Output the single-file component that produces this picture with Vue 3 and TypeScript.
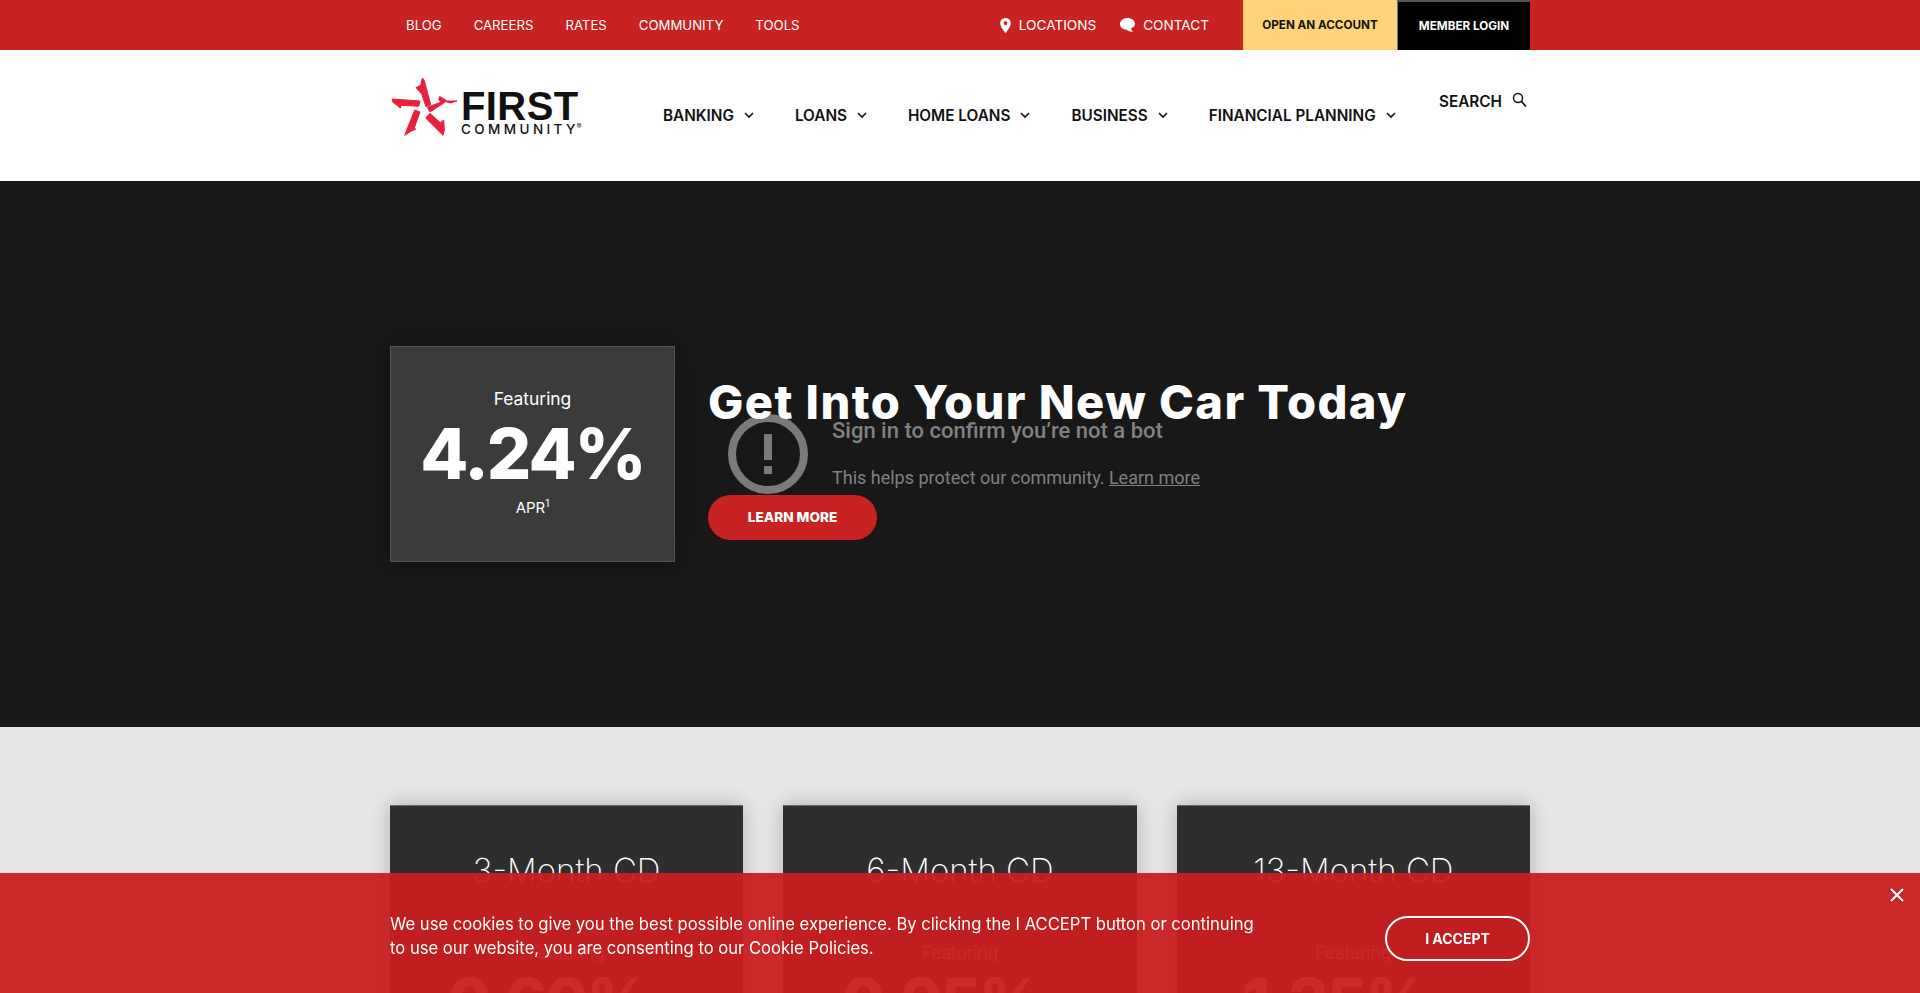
<script setup lang="ts">
const topLinks = ['Blog', 'Careers', 'Rates', 'Community', 'Tools']
const mainLinks = ['Banking', 'Loans', 'Home Loans', 'Business', 'Financial Planning']
const cds = [
  { name: '3-Month CD', rate: '0.60%' },
  { name: '6-Month CD', rate: '0.95%' },
  { name: '13-Month CD', rate: '1.25%' },
]
</script>

<template>
  <div class="page">
    <div class="topbar">
      <div class="wrap topbar__inner">
        <a v-for="link in topLinks" :key="link" class="topbar__link">{{ link }}</a>
        <a class="topbar__link topbar__link--icon topbar__locations">
          <svg width="11" height="15" viewBox="0 0 11 15"><path fill="#fff" fill-rule="evenodd" d="M5.500 0C2.500 0 .2 2.300.2 5.200c0 3.500 4.200 8.500 5.300 9.800 1.100-1.300 5.300-6.300 5.300-9.800C10.800 2.300 8.500 0 5.500 0zm0 7a1.900 1.900 0 1 1 0-3.800 1.900 1.900 0 0 1 0 3.800z" /></svg>
          Locations
        </a>
        <a class="topbar__link topbar__link--icon topbar__contact">
          <svg width="15" height="14" viewBox="0 0 15 14"><path fill="#fff" d="M7.500 0C3.400 0 0 2.500 0 6c0 3.200 2.800 5.600 6.500 5.800 1.500 1.300 3.800 2 6.500 2.200-1-.9-1.700-2.200-1.900-3.500C13.500 9.300 15 7.800 15 6 15 2.500 11.600 0 7.500 0z" /></svg>
          Contact
        </a>
        <a class="cta cta--open">Open an Account</a>
        <a class="cta cta--login">Member Login</a>
      </div>
    </div>

    <header class="header">
      <div class="wrap header__inner">
        <a class="logo">
          <svg class="logo__star" width="72" height="68" viewBox="0 0 216 204">
            <g fill="#e6203f" stroke="#e6203f" stroke-width="3" stroke-linejoin="round">
              <path d="M103 15l6 8 19 72-14 6-13-38-17-19 14-7z" />
              <path d="M207 84l-30 0-22-14-3 10 8 7-42 16 8 14 47-31 14 4z" />
              <path d="M13 78l83 6-4 16-52-3-3 8-24-19z" />
              <path d="M50 187l30-76 16 6-17 47 4 5-13 5z" />
              <path d="M165 187l-52-52 13-14 31 28 10-8 2 30z" />
            </g>
          </svg>
          <span class="logo__text">
            <span class="logo__first">FIRST</span>
            <span class="logo__community">COMMUNITY<sup>®</sup></span>
          </span>
        </a>
        <nav class="mainnav">
          <a v-for="link in mainLinks" :key="link" class="mainnav__link">
            {{ link }}
            <svg width="10" height="7" viewBox="0 0 10 7"><path d="M1 1l4 4 4-4" fill="none" stroke="#111" stroke-width="1.600" /></svg>
          </a>
        </nav>
        <a class="search">
          Search
          <svg class="search__icon" width="15" height="16" viewBox="0 0 15 16"><circle cx="6" cy="6" r="4.500" fill="none" stroke="#111" stroke-width="1.500" /><path d="M9.500 9.500l4.500 5" stroke="#111" stroke-width="1.800" /></svg>
        </a>
      </div>
    </header>

    <section class="hero">
      <div class="wrap hero__inner">
        <div class="rate">
          <p class="rate__label">Featuring</p>
          <p class="rate__value">4.24%</p>
          <p class="rate__apr">APR<sup>1</sup></p>
        </div>
        <div class="hero__copy">
          <h1 class="hero__title">Get Into Your New Car Today</h1>
          <a class="hero__btn">Learn More</a>
        </div>
      </div>
      <div class="bot">
        <svg class="bot__icon" width="80" height="80" viewBox="0 0 80 80">
          <circle cx="40" cy="40" r="36" fill="none" stroke="#7a7a7a" stroke-width="8" />
          <rect x="36" y="20" width="8" height="26" fill="#7a7a7a" />
          <rect x="36" y="52" width="8" height="8" fill="#7a7a7a" />
        </svg>
        <div>
          <p class="bot__title">Sign in to confirm you’re not a bot</p>
          <p class="bot__text">This helps protect our community. <u>Learn more</u></p>
        </div>
      </div>
    </section>

    <section class="rates">
      <div class="wrap rates__grid">
        <div v-for="cd in cds" :key="cd.name" class="card">
          <h2 class="card__name">{{ cd.name }}</h2>
          <div class="card__rule"></div>
          <p class="card__label">Featuring</p>
          <p class="card__rate">{{ cd.rate }}</p>
        </div>
      </div>
    </section>

    <div class="cookie">
      <div class="wrap cookie__inner">
        <p class="cookie__text">We use cookies to give you the best possible online experience. By clicking the I ACCEPT button or continuing to use our website, you are consenting to our Cookie Policies.</p>
        <button class="cookie__btn">I Accept</button>
      </div>
      <svg class="cookie__close" width="14" height="14" viewBox="0 0 14 14"><path d="M1 1l12 12M13 1L1 13" stroke="#fff" stroke-width="2" /></svg>
    </div>
  </div>
</template>

<style>
html, body { margin: 0; overflow: hidden; }
</style>

<style scoped>
.page {
  height: 100vh;
  overflow: hidden;
  font-family: Inter, "Liberation Sans", sans-serif;
  background: #e6e7e8;
}
p, h1, h2 { margin: 0; }
.wrap { width: 1140px; margin: 0 auto; }

.topbar { height: 50px; background: #c82222; }
.topbar__inner { display: flex; align-items: center; height: 50px; padding-left: 16px; box-sizing: border-box; }
.topbar__link {
  color: #fff;
  font-size: 13.200px;
  text-transform: uppercase;
  margin-right: 32px;
}
.topbar__link--icon { display: flex; align-items: center; gap: 8px; font-size: 13.600px; }
.topbar__locations { margin-left: auto; margin-right: 24px; }
.topbar__contact { margin-right: 34px; }
.cta {
  height: 50px;
  display: flex;
  align-items: center;
  justify-content: center;
  box-sizing: border-box;
  font-size: 11.700px;
  font-weight: 700;
  text-transform: uppercase;
}
.cta--open { width: 154px; background: #ffd37a; color: #111; }
.cta--login { width: 133px; background: #000; color: #fff; border-top: 2px solid #555; border-left: 1px solid #777; }

.header { height: 131px; background: #fff; }
.header__inner { display: flex; align-items: center; height: 131px; position: relative; }
.logo { display: flex; align-items: center; margin-left: -2px; margin-bottom: 18px; }
.logo__star { flex: none; }
.logo__text { display: flex; flex-direction: column; margin-left: 1px; margin-top: 13px; width: 128px; }
.logo__first {
  font-family: "Liberation Sans", sans-serif;
  font-size: 40px;
  font-weight: 700;
  line-height: 32px;
  letter-spacing: .4px;
  color: #111;
}
.logo__community {
  font-size: 13.500px;
  line-height: 15px;
  font-weight: 500;
  letter-spacing: 3.400px;
  color: #111;
  white-space: nowrap;
}
.logo__community sup { font-size: 7px; letter-spacing: 0; font-weight: 400; vertical-align: 5px; line-height: 0; margin-left: -2px; }
.mainnav { display: flex; margin-left: 74px; gap: 41px; }
.mainnav__link {
  display: flex;
  align-items: center;
  gap: 10px;
  font-size: 15.300px;
  font-weight: 600;
  color: #111;
  text-transform: uppercase;
  white-space: nowrap;
}
.search {
  display: flex;
  align-items: center;
  gap: 10px;
  margin-left: auto;
  margin-right: 3px;
  margin-bottom: 28px;
  font-size: 15.300px;
  font-weight: 600;
  color: #111;
  text-transform: uppercase;
}
.search__icon { margin-bottom: 3px; }

.hero { position: relative; height: 546px; background: #181818; }
.hero__inner { display: flex; align-items: center; height: 546px; gap: 33px; }
.rate {
  width: 285px;
  height: 216px;
  box-sizing: border-box;
  flex: none;
  background: #3b3b3b;
  border: 1px solid #555;
  box-shadow: 0 0 24px rgba(0, 0, 0, .35);
  color: #fff;
  text-align: center;
  padding-top: 40px;
}
.rate__label { font-size: 17.400px; line-height: 24px; }
.rate__value { font-size: 70px; line-height: 80px; font-weight: 800; letter-spacing: -2px; padding-top: 3px; }
.rate__apr { font-size: 15px; line-height: 24px; margin-top: 2px; }
.rate__apr sup { font-size: 10px; line-height: 0; }
.hero__copy { position: relative; z-index: 1; display: flex; flex-direction: column; align-items: flex-start; }
.hero__title { font-size: 47px; line-height: 65px; font-weight: 800; color: #fff; white-space: nowrap; letter-spacing: 1.440px; }
.hero__btn {
  margin-top: 61px;
  width: 169px;
  height: 45px;
  display: flex;
  align-items: center;
  justify-content: center;
  border-radius: 23px;
  background: #c82222;
  color: #fff;
  font-size: 13.600px;
  font-weight: 800;
  text-transform: uppercase;
}
.bot {
  position: absolute;
  left: 728px;
  top: 233px;
  display: flex;
  gap: 24px;
  font-family: Roboto, sans-serif;
  color: #808080;
}
.bot__icon { flex: none; }
.bot__title { font-size: 22px; line-height: 28px; font-weight: 500; margin-top: 3px; }
.bot__text { font-size: 18px; line-height: 24px; margin-top: 21px; }

.rates { padding-top: 78px; }
.rates__grid { display: grid; grid-template-columns: repeat(3, 1fr); gap: 40px; }
.card {
  background: #2e2e2e;
  border-top: 1px solid #666;
  height: 400px;
  box-shadow: 0 0 20px rgba(0, 0, 0, .25);
  color: #fff;
  text-align: center;
  padding-top: 46px;
  box-sizing: border-box;
}
.card__name { font-size: 33px; line-height: 36px; font-weight: 200; }
.card__rule { width: 190px; height: 1px; background: #666; margin: 14px auto 0; }
.card__label { font-size: 17.400px; line-height: 24px; font-weight: 300; margin-top: 38px; }
.card__rate { font-size: 62px; line-height: 80px; font-weight: 800; letter-spacing: -1.500px; margin-top: -4px; padding-right: 36px; }

.cookie {
  position: fixed;
  left: 0;
  right: 0;
  bottom: 0;
  height: 120px;
  background: rgba(201, 29, 32, .95);
  color: #fff;
}
.cookie__inner { display: flex; align-items: center; justify-content: space-between; height: 120px; padding-top: 6px; box-sizing: border-box; }
.cookie__text { width: 875px; font-size: 16.600px; line-height: 24px; }
.cookie__btn {
  width: 145px;
  height: 45px;
  margin-top: 4px;
  background: transparent;
  border: 2px solid #fff;
  border-radius: 23px;
  color: #fff;
  font-family: inherit;
  font-size: 14px;
  font-weight: 700;
  text-transform: uppercase;
}
.cookie__close { position: absolute; right: 16px; top: 15px; }
</style>
